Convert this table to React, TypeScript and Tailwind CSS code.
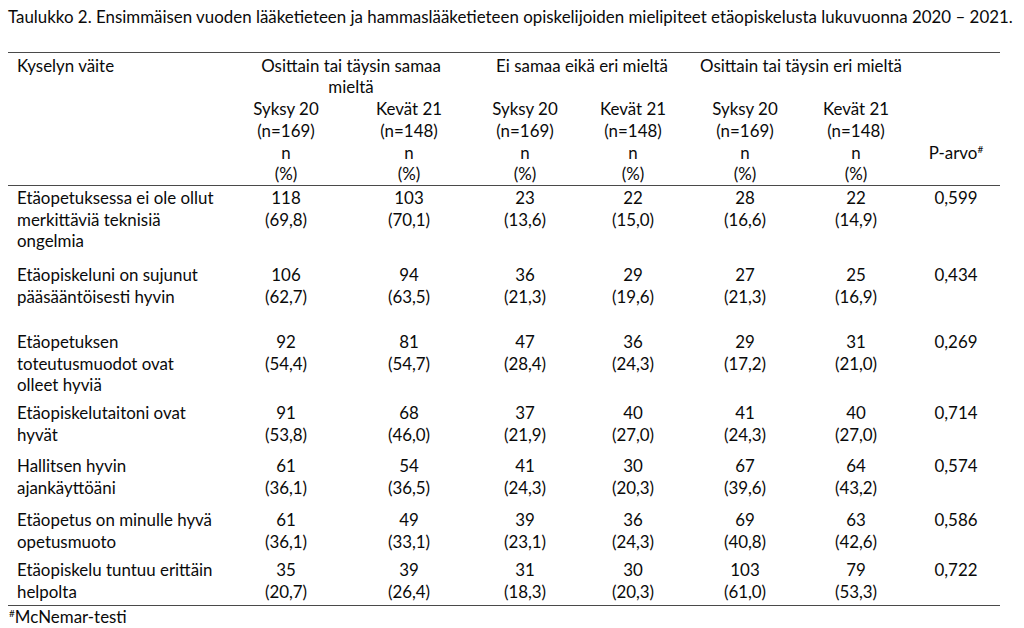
import React from "react";

const COLS = "grid grid-cols-[220px_116px_130px_102px_114px_110px_112px_88px]";

type Row = { label: string[]; vals: [string, string][]; p: string; h: string };

const rows: Row[] = [
  {
    label: ["Etäopetuksessa ei ole ollut", "merkittäviä teknisiä", "ongelmia"],
    vals: [["118", "(69,8)"], ["103", "(70,1)"], ["23", "(13,6)"], ["22", "(15,0)"], ["28", "(16,6)"], ["22", "(14,9)"]],
    p: "0,599",
    h: "h-[77px]",
  },
  {
    label: ["Etäopiskeluni on sujunut", "pääsääntöisesti hyvin"],
    vals: [["106", "(62,7)"], ["94", "(63,5)"], ["36", "(21,3)"], ["29", "(19,6)"], ["27", "(21,3)"], ["25", "(16,9)"]],
    p: "0,434",
    h: "h-[67px]",
  },
  {
    label: ["Etäopetuksen", "toteutusmuodot ovat", "olleet hyviä"],
    vals: [["92", "(54,4)"], ["81", "(54,7)"], ["47", "(28,4)"], ["36", "(24,3)"], ["29", "(17,2)"], ["31", "(21,0)"]],
    p: "0,269",
    h: "h-[71px]",
  },
  {
    label: ["Etäopiskelutaitoni ovat", "hyvät"],
    vals: [["91", "(53,8)"], ["68", "(46,0)"], ["37", "(21,9)"], ["40", "(27,0)"], ["41", "(24,3)"], ["40", "(27,0)"]],
    p: "0,714",
    h: "h-[53px]",
  },
  {
    label: ["Hallitsen hyvin", "ajankäyttöäni"],
    vals: [["61", "(36,1)"], ["54", "(36,5)"], ["41", "(24,3)"], ["30", "(20,3)"], ["67", "(39,6)"], ["64", "(43,2)"]],
    p: "0,574",
    h: "h-[54px]",
  },
  {
    label: ["Etäopetus on minulle hyvä", "opetusmuoto"],
    vals: [["61", "(36,1)"], ["49", "(33,1)"], ["39", "(23,1)"], ["36", "(24,3)"], ["69", "(40,8)"], ["63", "(42,6)"]],
    p: "0,586",
    h: "h-[50px]",
  },
  {
    label: ["Etäopiskelu tuntuu erittäin", "helpolta"],
    vals: [["35", "(20,7)"], ["39", "(26,4)"], ["31", "(18,3)"], ["30", "(20,3)"], ["103", "(61,0)"], ["79", "(53,3)"]],
    p: "0,722",
    h: "h-[46px]",
  },
];

const sub: [string, string][] = [
  ["Syksy 20", "(n=169)"],
  ["Kevät 21", "(n=148)"],
  ["Syksy 20", "(n=169)"],
  ["Kevät 21", "(n=148)"],
  ["Syksy 20", "(n=169)"],
  ["Kevät 21", "(n=148)"],
];

export default function App() {
  return (
    <div
      className="w-[1024px] h-[628px] bg-white text-[#0a0a0a] text-[16.9px] leading-[21.7px] overflow-hidden"
      style={{ fontFamily: "Lato, 'Noto Sans', sans-serif" }}
    >
      <div className="pl-[8px] pt-[6px] whitespace-nowrap">
        Taulukko 2. Ensimmäisen vuoden lääketieteen ja hammaslääketieteen opiskelijoiden mielipiteet etäopiskelusta lukuvuonna 2020 – 2021.
      </div>
      <div className="ml-[8px] w-[992px] mt-[24px]">
        <div className="border-t border-[#4a4a4a] border-b pt-[2px] pb-[0px]">
          <div className={COLS}>
            <div className="pl-[9px] whitespace-nowrap">Kyselyn väite</div>
            <div className="col-span-2 text-center whitespace-nowrap">
              Osittain tai täysin samaa
              <br />
              mieltä
            </div>
            <div className="col-span-2 text-center whitespace-nowrap">Ei samaa eikä eri mieltä</div>
            <div className="col-span-2 text-center whitespace-nowrap">Osittain tai täysin eri mieltä</div>
            <div />
            <div />
            {sub.map(([a, b], i) => (
              <div key={i} className="flex flex-col items-center whitespace-nowrap">
                <span>{a}</span>
                <span>{b}</span>
                <span>n</span>
                <span>(%)</span>
              </div>
            ))}
            <div className="flex flex-col items-center whitespace-nowrap">
              <span>&nbsp;</span>
              <span>&nbsp;</span>
              <span>
                P-arvo<span className="text-[10px] relative top-[-6px]">#</span>
              </span>
            </div>
          </div>
        </div>
        <div className="pt-[1px] border-b border-[#4a4a4a]">
          {rows.map((r, i) => (
            <div key={i} className={`${COLS} ${r.h} items-start`}>
              <div className="pl-[9px] whitespace-nowrap flex flex-col">
                {r.label.map((l, j) => (
                  <span key={j}>{l}</span>
                ))}
              </div>
              {r.vals.map(([n, pc], j) => (
                <div key={j} className="flex flex-col items-center">
                  <span>{n}</span>
                  <span>{pc}</span>
                </div>
              ))}
              <div className="text-center">{r.p}</div>
            </div>
          ))}
        </div>
        <div className="pl-[1px] whitespace-nowrap">
          <span className="text-[10px] relative top-[-6px]">#</span>McNemar-testi
        </div>
      </div>
    </div>
  );
}
